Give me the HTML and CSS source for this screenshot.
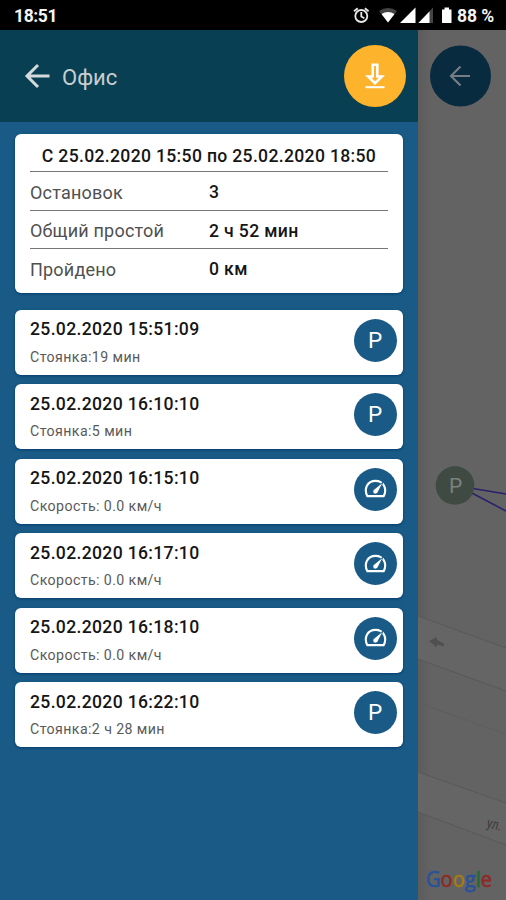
FILE: index.html
```
<!DOCTYPE html>
<html lang="ru">
<head>
<meta charset="utf-8">
<title>Офис</title>
<link rel="stylesheet" href="styles.css">
</head>
<body>
<svg class="defs" width="0" height="0">
  <symbol id="gauge" viewBox="0 0 24 24">
    <path d="M3.500 20C-.5 12.500 3.500 4 12 4s12.500 8.500 8.500 16z" fill="none" stroke="#fff" stroke-width="2.200" stroke-linejoin="round"/>
    <path d="M20.300 5l-6 11.500a2.700 2.700 0 1 1-4-3.500z" fill="#fff" stroke="#195b86" stroke-width=".9"/>
  </symbol>
</svg>
<div class="screen">
  <header class="status">
    <span class="clock">18:51</span>
    <svg class="status-icons" width="102" height="30" viewBox="0 0 102 30">
      <g fill="none" stroke="#e8e8e8" stroke-width="1.800">
        <circle cx="9.300" cy="16" r="6"/>
        <path d="M9.300 12v4.500l3 1.800M2 11.200l3.700-3M16.600 11.200l-3.700-3"/>
      </g>
      <path d="M27 11q9-6 18 0l-9 11.500z" fill="#444"/>
      <path d="M29.500 14q6.500-4 13 0L36 22.500z" fill="#fff"/>
      <path d="M48 23h15.500V7.500z" fill="#fff"/>
      <path d="M81 23V7.500L66 23z" fill="#444"/>
      <path d="M66.500 23H77.500V11.500z" fill="#fff"/>
      <path d="M90 9.500h2.500v-2h4.500v2h2.500v13.500H90z" fill="#fff"/>
    </svg>
    <span class="battery">88 %</span>
  </header>
  <div class="content">
    <main class="drawer">
      <div class="toolbar">
        <svg class="back" width="26" height="26" viewBox="0 0 26 26"><path d="M25.500 13H3M14 2L3 13l11 11" fill="none" stroke="#d4d9dc" stroke-width="3"/></svg>
        <h1>Офис</h1>
        <div class="download">
          <svg width="22" height="28" viewBox="0 0 22 28"><path d="M8.700 2.800h4.600v11.700h4.500L11 21.200l-6.800-6.700h4.500z" fill="none" stroke="#fff" stroke-width="2.600"/><path d="M1.500 25.200h19" stroke="#fff" stroke-width="2"/></svg>
        </div>
      </div>
      <section class="card summary">
        <h2><span>С 25.02.2020 15:50 по 25.02.2020 18:50</span></h2>
        <div class="row"><span>Остановок</span><b>3</b></div>
        <div class="row"><span>Общий простой</span><b>2 ч 52 мин</b></div>
        <div class="row"><span>Пройдено</span><b>0 км</b></div>
      </section>
      <section class="events">
        <article class="card event"><div><h3>25.02.2020 15:51:09</h3><p>Стоянка:19 мин</p></div><span class="badge">P</span></article>
        <article class="card event"><div><h3>25.02.2020 16:10:10</h3><p>Стоянка:5 мин</p></div><span class="badge">P</span></article>
        <article class="card event"><div><h3>25.02.2020 16:15:10</h3><p>Скорость: 0.0 км/ч</p></div><span class="badge"><svg width="23" height="23"><use href="#gauge"/></svg></span></article>
        <article class="card event"><div><h3>25.02.2020 16:17:10</h3><p>Скорость: 0.0 км/ч</p></div><span class="badge"><svg width="23" height="23"><use href="#gauge"/></svg></span></article>
        <article class="card event"><div><h3>25.02.2020 16:18:10</h3><p>Скорость: 0.0 км/ч</p></div><span class="badge"><svg width="23" height="23"><use href="#gauge"/></svg></span></article>
        <article class="card event"><div><h3>25.02.2020 16:22:10</h3><p>Стоянка:2 ч 28 мин</p></div><span class="badge">P</span></article>
      </section>
    </main>
    <aside class="map">
      <svg width="88" height="870" viewBox="418 30 88 870">
        <path d="M418 616L506 648V691L418 659zM418 772L506 803V845L418 812z" fill="#656565"/>
        <g fill="none" stroke="#595959" stroke-width="1">
          <path d="M418 616L506 648M418 659L506 691M418 772L506 803M418 812L506 845"/>
          <path d="M418 702l20 8L506 734" stroke="#5e5e5e"/>
        </g>
        <path d="M429 641l8-4v3l7 3.500v3l-7-2v3z" fill="#505050"/>
        <path d="M470 488L506 494M470 492L506 511" stroke="#28206a" stroke-width="1.500"/>
        <circle cx="455" cy="485.500" r="19.300" fill="#3f4a43"/>
        <text class="marker" x="455.500" y="492.500" text-anchor="middle">P</text>
        <text class="street" transform="translate(486 827) rotate(14)" textLength="15" lengthAdjust="spacingAndGlyphs">ул.</text>
        <circle cx="460.500" cy="76" r="30.500" fill="#092b40"/>
        <path d="M470 76H451.500M460.500 66.500L451 76l9.500 9.500" fill="none" stroke="#757d82" stroke-width="2.200"/>
        <text class="google" x="426" y="886.500" textLength="66" lengthAdjust="spacingAndGlyphs"><tspan fill="#28529a" stroke="#28529a">G</tspan><tspan fill="#8e2925" stroke="#8e2925">o</tspan><tspan fill="#a47d12" stroke="#a47d12">o</tspan><tspan fill="#28529a" stroke="#28529a">g</tspan><tspan fill="#216c35" stroke="#216c35">l</tspan><tspan fill="#8e2925" stroke="#8e2925">e</tspan></text>
      </svg>
    </aside>
  </div>
</div>
</body>
</html>
```
FILE: styles.css
```
* { box-sizing: border-box; }
body, h1, h2, h3, p { margin: 0; }
body { font-family: Roboto, "Liberation Sans", sans-serif; background: #000; }
.defs { display: block; }
.screen { width: 506px; height: 900px; display: flex; flex-direction: column; overflow: hidden; }
.status { height: 30px; background: #000; color: #f4f4f4; display: flex; align-items: center; padding: 2px 11px 0 14px; font-size: 17.500px; font-weight: 700; }
.clock { flex: 1; letter-spacing: -0.4px; }
.status-icons { margin: -2px 3px 0 0; }
.battery { width: 38px; white-space: nowrap; letter-spacing: -0.1px; }
.content { flex: 1; display: flex; }
.drawer { width: 417.500px; background: #195b86; }
.toolbar { height: 92px; background: #083f52; display: flex; align-items: center; padding: 0 11.500px 0 24px; }
h1 { flex: 1; margin-left: 12px; padding-top: 2px; font-size: 22px; font-weight: 400; color: #c8cdd0; letter-spacing: 0; }
.download { width: 62px; height: 62px; border-radius: 50%; background: #fdb32b; display: flex; align-items: center; justify-content: center; }
.card { background: #fff; border-radius: 6px; box-shadow: 0 1px 3px #063b70; }
.summary { width: 388px; height: 159px; margin: 12.400px 0 0 15px; padding: 6px 15px 0; color: #161616; }
h2 { height: 31px; line-height: 32px; font-size: 17.600px; font-weight: 500; text-align: center; white-space: nowrap; }
h2 span { letter-spacing: 0.32px; }
.row { height: 38.500px; border-top: 1px solid #777; display: flex; align-items: center; padding-top: 2px; font-size: 18px; color: #505050; }
.row span { width: 179px; font-weight: 400; letter-spacing: 0.2px; }
.row b { font-size: 17.600px; font-weight: 500; color: #161616; letter-spacing: 0.35px; }
.events { display: flex; flex-direction: column; gap: 9.500px; margin: 16.500px 0 0 15px; width: 388px; }
.event { height: 65px; display: flex; align-items: center; justify-content: space-between; padding: 0 6.500px 0 15px; }
h3 { font-size: 17.600px; line-height: 22px; font-weight: 500; color: #161616; letter-spacing: 0.32px; margin-top: -1px; }
.event p { margin-top: 7.500px; font-size: 14.200px; line-height: 18px; font-weight: 400; color: #5a5a5a; letter-spacing: 0.4px; }
.badge { width: 43px; height: 43px; border-radius: 50%; background: #195b86; color: #fff; font-size: 22.500px; display: flex; align-items: center; justify-content: center; margin-top: -4px; padding-bottom: 1px; }
.map { flex: 1; background: linear-gradient(90deg, #5c5c5c, #636363 14px); }
.map svg { display: block; }
.marker { font-size: 21px; fill: #7b817c; }
.street { font-size: 14px; fill: #3c3c3c; }
.google { font-family: "Open Sans", sans-serif; font-size: 21px; font-weight: 500; stroke-width: 0.6px; }
```
